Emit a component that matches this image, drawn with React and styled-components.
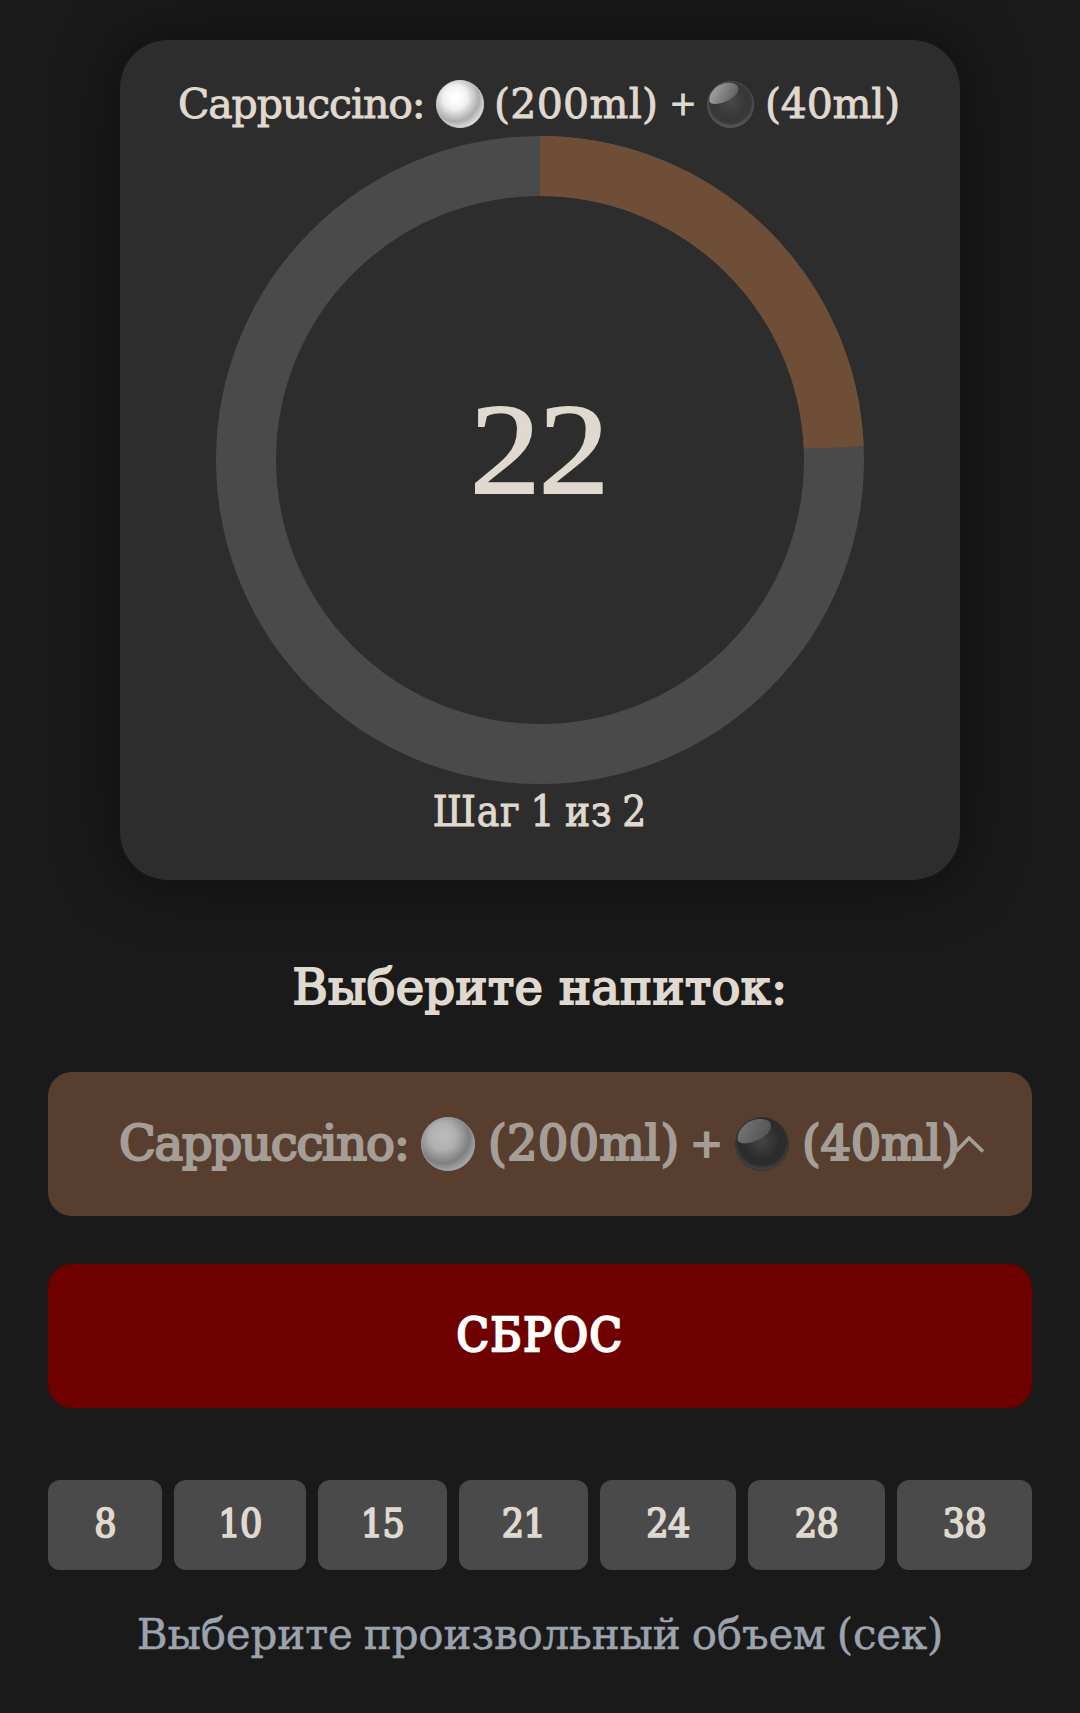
import React from "react";
import styled, { createGlobalStyle } from "styled-components";

const GlobalStyle = createGlobalStyle`
  * { box-sizing: border-box; }
  body {
    margin: 0;
    background: #1a1a1a;
    color: #e0d9cf;
    font-family: "DejaVu Serif", serif;
  }
  button { font-family: inherit; color: inherit; border: 0; }
`;

const Page = styled.main`
  min-height: 1713px;
  padding: 40px 48px 0;
  display: flex;
  flex-direction: column;
`;

const TimerCard = styled.section`
  width: 840px;
  height: 840px;
  align-self: center;
  padding-top: 37px;
  display: flex;
  flex-direction: column;
  align-items: center;
  background: #2d2d2d;
  border-radius: 48px;
  box-shadow: 0 0 60px rgba(0, 0, 0, 0.5);
`;

const Recipe = styled.div`
  display: flex;
  align-items: center;
  width: ${(p) => p.$width}px;
  height: 54px;
  font-size: ${(p) => p.$size}px;
  line-height: 48px;
  white-space: nowrap;
  -webkit-text-stroke: ${(p) => p.$stroke}px currentColor;
`;

const Part = styled.span`
  flex: none;
  width: ${(p) => p.$width}px;
  padding-bottom: ${(p) => p.$lift || 0}px;
  letter-spacing: ${(p) => p.$track || 0}px;
`;

const Plus = styled.span`
  flex: none;
  display: flex;
  justify-content: center;
  width: ${(p) => p.$width}px;
  margin-right: ${(p) => p.$gap}px;
  font-size: 0.8em;
`;

const Ball = styled.svg`
  flex: none;
  display: block;
  width: ${(p) => p.$size}px;
  height: ${(p) => p.$size}px;
  margin-right: ${(p) => p.$gap}px;
`;

const Dial = styled.div`
  display: grid;
  place-items: center;
  width: 648px;
  height: 648px;
  margin-top: 5px;
  > * { grid-area: 1 / 1; }
`;

const Ring = styled.svg`
  width: 648px;
  height: 648px;
`;

const Seconds = styled.span`
  font-family: "Liberation Serif", serif;
  font-size: 129px;
  line-height: 140px;
  letter-spacing: -2px;
  margin: 0 4px 21px 0;
  transform: scaleX(1.1);
  -webkit-text-stroke: 1.8px currentColor;
`;

const Step = styled.p`
  margin: 0;
  padding-top: 4px;
  font-family: "DejaVu Serif Condensed", "DejaVu Serif", serif;
  font-size: 42px;
  line-height: 48px;
  letter-spacing: 0.8px;
  word-spacing: -3px;
  -webkit-text-stroke: 0.9px currentColor;
`;

const Heading = styled.h2`
  margin: 71px 0 49px;
  font-size: 48px;
  font-weight: 400;
  line-height: 72px;
  letter-spacing: 0.3px;
  text-align: center;
  -webkit-text-stroke: 2px currentColor;
`;

const DrinkSelect = styled.button`
  position: relative;
  height: 144px;
  padding: 0 0 0 71px;
  display: flex;
  align-items: center;
  text-align: left;
  border-radius: 24px;
  background: #573e2f;
  color: #a59e96;
`;

const Chevron = styled.svg`
  position: absolute;
  right: 48px;
  top: 60px;
  width: 32px;
  height: 24px;
`;

const ResetButton = styled.button`
  height: 144px;
  margin-top: 48px;
  padding: 0 0 3px;
  border-radius: 24px;
  background: #6f0000;
  color: #fff;
  font-family: "DejaVu Serif Condensed", "DejaVu Serif", serif;
  font-size: 47px;
  letter-spacing: 1.6px;
  -webkit-text-stroke: 2.4px currentColor;
`;

const Presets = styled.div`
  display: flex;
  justify-content: space-between;
  margin-top: 72px;
`;

const Preset = styled.button`
  width: ${(p) => p.$width}px;
  height: 90px;
  padding: 0 0 4px;
  border-radius: 12px;
  background: #4a4a4a;
  font-family: "DejaVu Serif Condensed", "DejaVu Serif", serif;
  font-size: 39px;
  letter-spacing: -0.6px;
  -webkit-text-stroke: 1.7px currentColor;
`;

const Hint = styled.p`
  margin: 35px 0 0;
  font-size: 42px;
  line-height: 60px;
  letter-spacing: -0.19px;
  word-spacing: -2px;
  text-align: center;
  color: #9ca3af;
  -webkit-text-stroke: 0.5px currentColor;
`;

function MilkBall({ id, size, gap, dim }) {
  const c = dim
    ? ["#b9b9b9", "#b0b0b0", "#7f7f7f", "#a6a8aa"]
    : ["#ffffff", "#f1f1f1", "#acacac", "#dedede"];
  return (
    <Ball viewBox="0 0 54 54" $size={size} $gap={gap}>
      <defs>
        <radialGradient id={id} cx="0.4" cy="0.36" r="0.66">
          <stop offset="0.1" stopColor={c[0]} />
          <stop offset="0.38" stopColor={c[1]} />
          <stop offset="0.76" stopColor={c[2]} />
          <stop offset="1" stopColor={c[3]} />
        </radialGradient>
      </defs>
      <circle cx="27" cy="27" r="26.6" fill={`url(#${id})`} stroke={c[3]} strokeWidth="0.8" />
    </Ball>
  );
}

function CoffeeBall({ id, size, gap, dim }) {
  const c = dim
    ? ["#454545", "#2c2c2c", "#4b4b4b", "#747474", "#545454"]
    : ["#484848", "#383838", "#616161", "#a4a4a4", "#606060"];
  return (
    <Ball viewBox="0 0 54 54" $size={size} $gap={gap}>
      <defs>
        <radialGradient id={`${id}-body`} cx="0.5" cy="0.45" r="0.56">
          <stop offset="0" stopColor={c[0]} />
          <stop offset="0.6" stopColor={c[1]} />
          <stop offset="0.8" stopColor={c[1]} />
          <stop offset="1" stopColor={c[2]} />
        </radialGradient>
        <linearGradient id={`${id}-shine`} x1="0.05" y1="0.3" x2="0.95" y2="0.6">
          <stop offset="0" stopColor={c[3]} />
          <stop offset="1" stopColor={c[4]} />
        </linearGradient>
      </defs>
      <circle cx="27" cy="27" r="26.5" fill={`url(#${id}-body)`} stroke={dim ? "#333" : "#555"} />
      <path
        d="M3 23.500C1 16 9 5 20 2.500C28 1 36 3 36 9C36 16 27 22 18 25C11 27 4 27 3 23.500Z"
        fill={`url(#${id}-shine)`}
      />
    </Ball>
  );
}

const CIRCUMFERENCE = 2 * Math.PI * 294;
const PROGRESS = 0.2431;

const PRESETS = [
  [8, 114],
  [10, 132],
  [15, 129],
  [21, 129],
  [24, 136],
  [28, 137],
  [38, 135],
];

export default function App() {
  return (
    <Page>
      <GlobalStyle />
      <TimerCard>
        <Recipe $width={724} $size={41} $stroke={0.9}>
          <Part $width={258} $track={-1.1}>Cappuccino:</Part>
          <MilkBall id="milk-title" size={48} gap={10} />
          <Part $width={176} $track={0.3}>(200ml)</Part>
          <Plus $width={26} $gap={11}>+</Plus>
          <CoffeeBall id="coffee-title" size={47} gap={11} />
          <Part $width={134} $track={-0.2}>(40ml)</Part>
        </Recipe>
        <Dial>
          <Ring viewBox="0 0 648 648" fill="none" strokeWidth="60">
            <circle cx="324" cy="324" r="294" stroke="#4a4a4a" />
            <circle
              cx="324"
              cy="324"
              r="294"
              stroke="#6f4e37"
              strokeDasharray={`${CIRCUMFERENCE * PROGRESS} ${CIRCUMFERENCE}`}
              transform="rotate(-90 324 324)"
            />
          </Ring>
          <Seconds>22</Seconds>
        </Dial>
        <Step>Шаг 1 из 2</Step>
      </TimerCard>

      <Heading>Выберите напиток:</Heading>

      <DrinkSelect>
        <Recipe $width={844} $size={48} $stroke={2.2}>
          <Part $width={302} $track={-1.2} $lift={2}>Cappuccino:</Part>
          <MilkBall id="milk-select" size={54} gap={13} dim />
          <Part $width={204} $track={0.2} $lift={2}>(200ml)</Part>
          <Plus $width={29} $gap={14}>+</Plus>
          <CoffeeBall id="coffee-select" size={54} gap={13} dim />
          <Part $width={160} $track={-0.3} $lift={2}>(40ml)</Part>
        </Recipe>
        <Chevron viewBox="0 0 32 24" fill="none" stroke="currentColor" strokeWidth="3.6">
          <path d="M4 19.500L17 6L31 19.500" />
        </Chevron>
      </DrinkSelect>

      <ResetButton>СБРОС</ResetButton>

      <Presets>
        {PRESETS.map(([seconds, width]) => (
          <Preset key={seconds} $width={width}>{seconds}</Preset>
        ))}
      </Presets>

      <Hint>Выберите произвольный объем (сек)</Hint>
    </Page>
  );
}
